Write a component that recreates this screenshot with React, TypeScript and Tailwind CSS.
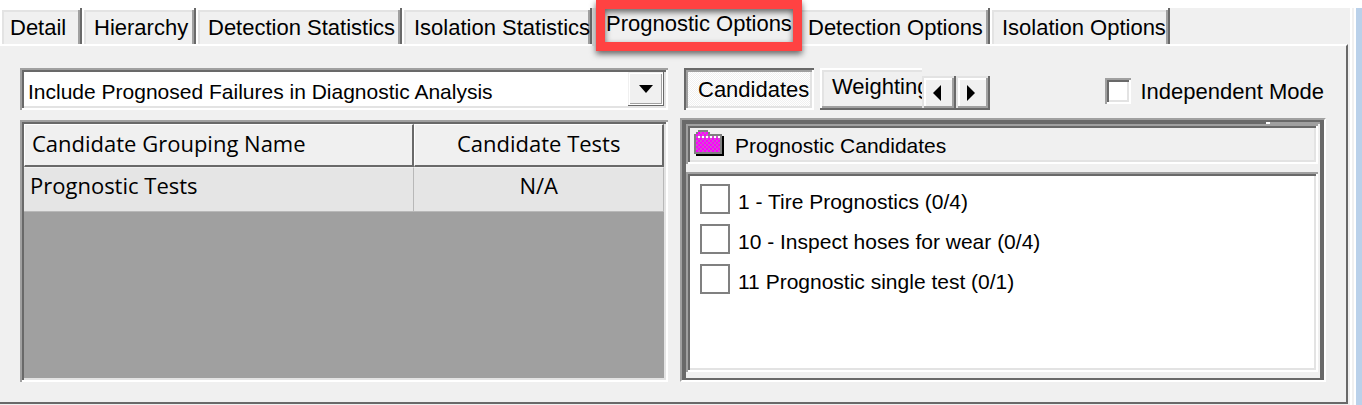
import { useState, type ReactNode } from "react";
import clsx from "clsx";

const sunken =
  "p-1 shadow-[inset_2px_2px_0_#a0a0a0,inset_-2px_-2px_0_#fff,inset_4px_4px_0_#696969,inset_-4px_-4px_0_#e3e3e3]";
const raised =
  "shadow-[inset_-2px_-2px_0_#696969,inset_2px_2px_0_#e3e3e3,inset_-4px_-4px_0_#a0a0a0,inset_4px_4px_0_#fff]";

const tabs = [
  { name: "Detail", width: "w-[82px] pl-[10px]" },
  { name: "Hierarchy", width: "w-[114px] pl-3" },
  { name: "Detection Statistics", width: "w-[206px] pl-3" },
  { name: "Isolation Statistics", width: "w-[190px] pl-3" },
  { name: "Prognostic Options", width: "w-[204px] pl-[14px]" },
  { name: "Detection Options", width: "w-[194px] pl-3" },
  { name: "Isolation Options", width: "w-[180px] pl-3" },
];

const candidates = [
  "1 - Tire Prognostics (0/4)",
  "10 - Inspect hoses for wear (0/4)",
  "11 Prognostic single test (0/1)",
];

function FolderIcon() {
  return (
    <svg width="30" height="26" viewBox="0 0 15 13" shapeRendering="crispEdges" aria-hidden="true">
      <defs>
        <pattern id="pink" width="2" height="2" patternUnits="userSpaceOnUse">
          <path fill="#ff00ff" d="M0 0h2v2H0z" />
          <path fill="#d050d0" d="M0 0h1v1H0zM1 1h1v1H1z" />
        </pattern>
      </defs>
      <path fill="#000" d="M1 12v1h14V3h-1v9z" />
      <path fill="#808080" d="M2 0h5v1h1v1h6v10H0V2h1V1h1z" />
      <path fill="url(#pink)" d="M2 1h5v2h6v8H1V2h1z" />
      <path fill="#fff" d="M2 3h1v1H2zM4 3h1v1H4zM6 3h1v1H6zM8 3h1v1H8zM10 3h1v1h-1zM12 3h1v1h-1z" />
    </svg>
  );
}

function TabStrip() {
  const [active, setActive] = useState("Prognostic Options");

  return (
    <div role="tablist" className="flex h-9 items-start">
      {tabs.map((tab) => {
        const selected = tab.name === active;
        return (
          <button
            key={tab.name}
            role="tab"
            aria-selected={selected}
            onClick={() => setActive(tab.name)}
            className={clsx(
              "relative shrink-0 whitespace-nowrap text-left",
              tab.width,
              selected
                ? "z-10 -mb-0.5 h-[38px] bg-[#f0f0f0] pb-1.5 shadow-[inset_2px_0_0_#e3e3e3]"
                : "h-9 pt-1 shadow-[inset_-2px_0_0_#696969,inset_2px_2px_0_#fff,inset_-4px_0_0_#a0a0a0,inset_4px_4px_0_#e3e3e3]"
            )}
          >
            {tab.name}
            {selected && (
              <span className="absolute -top-2 left-1 h-[51px] w-[206px] border-[9px] border-[#ff4242] drop-shadow-[0_3px_3px_rgba(0,0,0,0.6)]" />
            )}
          </button>
        );
      })}
    </div>
  );
}

function AnalysisSelect() {
  return (
    <div className={clsx("relative h-[42px] bg-white", sunken)}>
      <select
        aria-label="Prognosed failures"
        className="h-full w-full appearance-none bg-white pl-1 pt-1.5 text-[21px] outline-none"
      >
        <option>Include Prognosed Failures in Diagnostic Analysis</option>
      </select>
      <span className="pointer-events-none absolute right-1 top-1 flex h-[34px] w-9 items-center justify-center bg-[#f0f0f0] shadow-[inset_-1px_-1px_0_#696969,inset_1px_1px_0_#f0f0f0,inset_-2px_-2px_0_#fff,inset_2px_2px_0_#fff,inset_-3px_-3px_0_#a0a0a0]">
        <svg width="14" height="8" viewBox="0 0 14 8" aria-hidden="true">
          <path d="M0 0h14L7 8z" />
        </svg>
      </span>
    </div>
  );
}

function GroupingTable() {
  return (
    <div className={clsx("flex-1 bg-[#a0a0a0]", sunken)}>
      <table className="w-full table-fixed border-separate border-spacing-0 font-['Open_Sans','Noto_Sans',sans-serif] text-[22px] leading-7">
        <thead>
          <tr className="h-[43px] bg-[#f0f0f0]">
            <th className="w-[61%] border-b-2 border-l border-r-2 border-t border-b-[#696969] border-l-white border-r-[#696969] border-t-white pb-1 pl-[7px] text-left font-normal">
              Candidate Grouping Name
            </th>
            <th className="border-b-2 border-l border-r-2 border-t border-b-[#696969] border-l-white border-r-[#696969] border-t-white pb-1 font-normal">
              Candidate Tests
            </th>
          </tr>
        </thead>
        <tbody>
          <tr className="h-[45px] bg-[#e5e5e5]">
            <td className="border-b border-r border-t border-b-[#b8b8b8] border-r-[#b8b8b8] border-t-[#f0f0f0] pb-[10px] pl-1.5">
              Prognostic Tests
            </td>
            <td className="border-b border-r border-t border-b-[#b8b8b8] border-r-[#b8b8b8] border-t-[#f0f0f0] pb-[10px] text-center">
              N/A
            </td>
          </tr>
        </tbody>
      </table>
    </div>
  );
}

function SpinButton({ label, children }: { label: string; children: ReactNode }) {
  return (
    <button
      aria-label={label}
      className={clsx("flex h-[34px] w-[34px] items-center justify-center bg-[#f0f0f0] pr-1", raised)}
    >
      <svg width="8" height="16" viewBox="0 0 8 16" aria-hidden="true">
        {children}
      </svg>
    </button>
  );
}

function SubTabs() {
  return (
    <div className="flex h-[42px] items-end pl-1 pr-0.5">
      <button className="mr-1.5 h-[42px] w-[130px] bg-[repeating-conic-gradient(#fff_0_25%,#f0f0f0_0_50%)] bg-[length:2px_2px] pl-[14px] pt-0.5 text-left shadow-[inset_2px_2px_0_#696969,inset_-2px_-2px_0_#fff,inset_4px_4px_0_#a0a0a0,inset_-4px_-4px_0_#e3e3e3]">
        Candidates
      </button>
      <button className="h-[42px] w-[102px] overflow-hidden whitespace-nowrap pb-1 pl-3 text-left shadow-[inset_0_-2px_0_#696969,inset_2px_2px_0_#fff,inset_0_-4px_0_#a0a0a0,inset_4px_4px_0_#e3e3e3]">
        Weighting
      </button>
      <SpinButton label="Scroll left">
        <path d="M8 0v16L0 8z" />
      </SpinButton>
      <SpinButton label="Scroll right">
        <path d="M0 0v16l8-8z" />
      </SpinButton>
      <label className="ml-auto flex h-[42px] items-center gap-[10px] whitespace-nowrap">
        <input type="checkbox" className={clsx("mt-1 h-[26px] w-[26px] appearance-none bg-white", sunken)} />
        <span className="pt-1.5">Independent Mode</span>
      </label>
    </div>
  );
}

function CandidatePanel() {
  return (
    <div className="border-2 border-b-white border-l-[#a0a0a0] border-r-white border-t-[#a0a0a0] text-[21px]">
      <div className="border-x-4 border-y-2 border-[#696969] pb-1.5">
        <div className="flex h-0.5 bg-[#696969]">
          <span className="ml-auto w-1 bg-white" />
          <span className="w-[50px] bg-[#a0a0a0]" />
        </div>
        <h2 className={clsx("mr-0.5 flex h-10 items-center", sunken)}>
          <span className="ml-1 mr-[11px] mt-0.5 self-start">
            <FolderIcon />
          </span>
          <span className="pt-1">Prognostic Candidates</span>
        </h2>
        <ul className={clsx("mr-0.5 mt-2 min-h-[200px] bg-white", sunken)}>
          {candidates.map((name, i) => (
            <li key={name} className={clsx("ml-[10px]", i === 0 ? "mt-2" : "mt-[10px]")}>
              <label className="flex h-[30px] items-center gap-2">
                <input
                  type="checkbox"
                  className="h-[30px] w-[30px] appearance-none border-2 border-[#808080] bg-white"
                />
                <span className="pt-1.5">{name}</span>
              </label>
            </li>
          ))}
        </ul>
      </div>
    </div>
  );
}

export default function App() {
  return (
    <div className="border-t-8 border-white bg-[#f0f0f0] font-['Liberation_Sans',Arial,sans-serif] text-[22px] leading-7 text-black">
      <div className="flex">
        <main className="min-w-0 flex-1 pb-px pr-0.5">
          <TabStrip />
          <div className="grid grid-cols-[648fr_646fr] gap-3 border-b-2 border-r-2 border-t-2 border-b-[#696969] border-r-[#696969] border-t-white px-5 pb-5 pt-[22px]">
            <section className="flex min-w-0 flex-col gap-[10px]">
              <AnalysisSelect />
              <GroupingTable />
            </section>
            <section className="flex min-w-0 flex-col gap-2">
              <SubTabs />
              <CandidatePanel />
            </section>
          </div>
        </main>
        <div className="w-1.5 border-x-2 border-white" />
        <div className="w-1.5 bg-[#bad1ea]" />
      </div>
    </div>
  );
}
